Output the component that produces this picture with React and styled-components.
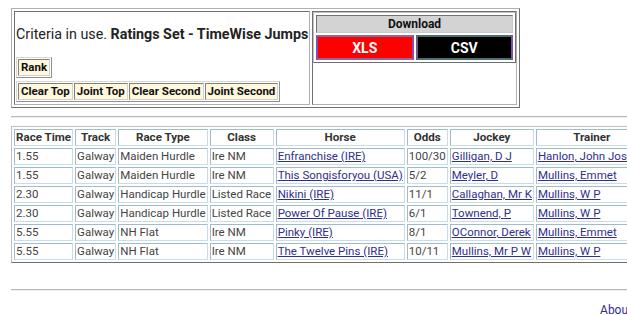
import React from "react";
import styled, { createGlobalStyle } from "styled-components";

const GlobalStyle = createGlobalStyle`
  html, body {
    margin: 0;
    padding: 0;
    background: #fff;
    overflow: hidden;
  }
  body {
    font-family: Roboto, "Liberation Sans", Arial, sans-serif;
    color: #222;
  }
`;

const Page = styled.div`
  width: 700px;
  padding: 8px 0 0 11px;
`;

const CriteriaTable = styled.table`
  border: 1px solid;
  border-color: #b0b0b0 #707070 #707070 #b0b0b0;
  border-spacing: 2px;
  border-collapse: separate;
`;

const CriteriaCell = styled.td`
  border: 1px solid;
  border-color: #707070 #b0b0b0 #b0b0b0 #707070;
  padding: 0;
  vertical-align: top;
  width: ${(p) => p.$width};
  height: 92px;
`;

const CriteriaText = styled.div`
  font-size: 14.3px;
  padding: 14px 0 0 1px;
  height: 31px;
  line-height: 17px;
  white-space: nowrap;
`;

const ButtonTable = styled.table`
  border: 1px solid;
  border-color: #d8d8d0 #909090 #909090 #d8d8d0;
  border-spacing: 1px;
  border-collapse: separate;
  margin: ${(p) => p.$margin || "0"};
`;

const RankButton = styled.td`
  background: #fff8dc;
  border: 1px solid;
  border-color: #808080 #d0d0d0 #d0d0d0 #808080;
  font-size: 11.5px;
  font-weight: bold;
  line-height: 13px;
  padding: 1px 2px;
  white-space: nowrap;
  color: #111;
`;

const DownloadTable = styled.table`
  width: 100%;
  border: 1px solid;
  border-color: #c0c0c0 #707070 #707070 #c0c0c0;
  border-spacing: 2px;
  border-collapse: separate;
`;

const DownloadHead = styled.td`
  background: #d3d3d3;
  border: 1px solid;
  border-color: #707070 #c8c8c8 #c8c8c8 #707070;
  text-align: center;
  font-size: 12px;
  font-weight: bold;
  height: 16px;
  padding: 0;
  color: #111;
`;

const FileButton = styled.td`
  background: ${(p) => p.$bg};
  color: #fff;
  border: 2px solid;
  border-color: ${(p) => p.$edge};
  text-align: center;
  font-size: 14px;
  font-weight: bold;
  height: 20px;
  padding: 1px 0 0 0;
  width: 50%;
`;

const Rule = styled.div`
  height: 0;
  border-top: 1px solid #b8b8b8;
  border-bottom: 1px solid #eeeeee;
  margin: ${(p) => p.$margin};
`;

const RaceTable = styled.table`
  border: 1px solid;
  border-color: #c0c0c0 #707070 #707070 #c0c0c0;
  border-spacing: 2px;
  border-collapse: separate;
  font-size: 11.5px;
`;

const HeadCell = styled.th`
  border: 1px solid;
  border-color: #9fbccb #c8dde8 #c8dde8 #9fbccb;
  font-weight: bold;
  font-size: 11.6px;
  color: #333;
  padding: 0 1px;
  height: 15px;
  line-height: 15px;
  white-space: nowrap;
  text-align: center;
  min-width: ${(p) => p.$w || 0}px;
`;

const DataCell = styled.td`
  border: 1px solid;
  border-color: #9fbccb #c8dde8 #c8dde8 #9fbccb;
  color: #444;
  padding: 0 1px;
  height: 15px;
  line-height: 15px;
  white-space: nowrap;
`;

const RaceLink = styled.a`
  color: #2f2f8f;
  text-decoration: underline;
`;

const Footer = styled.div`
  text-align: right;
  padding: 12px 0 0 0;
  font-size: 12px;
`;

const FooterLink = styled.a`
  color: #2f2f8f;
  text-decoration: none;
  margin-right: 79px;
`;

const columns = [
  { label: "Race Time", w: 0 },
  { label: "Track", w: 0 },
  { label: "Race Type", w: 0 },
  { label: "Class", w: 60 },
  { label: "Horse", w: 0 },
  { label: "Odds", w: 0 },
  { label: "Jockey", w: 0 },
  { label: "Trainer", w: 0 },
];

const races = [
  ["1.55", "Galway", "Maiden Hurdle", "Ire NM", "Enfranchise (IRE)", "100/30", "Gilligan, D J", "Hanlon, John Joseph"],
  ["1.55", "Galway", "Maiden Hurdle", "Ire NM", "This Songisforyou (USA)", "5/2", "Meyler, D", "Mullins, Emmet"],
  ["2.30", "Galway", "Handicap Hurdle", "Listed Race", "Nikini (IRE)", "11/1", "Callaghan, Mr K", "Mullins, W P"],
  ["2.30", "Galway", "Handicap Hurdle", "Listed Race", "Power Of Pause (IRE)", "6/1", "Townend, P", "Mullins, W P"],
  ["5.55", "Galway", "NH Flat", "Ire NM", "Pinky (IRE)", "8/1", "OConnor, Derek", "Mullins, Emmet"],
  ["5.55", "Galway", "NH Flat", "Ire NM", "The Twelve Pins (IRE)", "10/11", "Mullins, Mr P W", "Mullins, W P"],
];

const linked = [4, 6, 7];

export default function App() {
  return (
    <>
      <GlobalStyle />
      <Page>
        <CriteriaTable>
          <tbody>
            <tr>
              <CriteriaCell $width="294px">
                <CriteriaText>
                  Criteria in use. <b>Ratings Set - TimeWise Jumps</b>
                </CriteriaText>
                <ButtonTable $margin="0 0 3px 1px">
                  <tbody>
                    <tr>
                      <RankButton>Rank</RankButton>
                    </tr>
                  </tbody>
                </ButtonTable>
                <ButtonTable $margin="0 0 0 1px">
                  <tbody>
                    <tr>
                      <RankButton>Clear Top</RankButton>
                      <RankButton>Joint Top</RankButton>
                      <RankButton>Clear Second</RankButton>
                      <RankButton>Joint Second</RankButton>
                    </tr>
                  </tbody>
                </ButtonTable>
              </CriteriaCell>
              <CriteriaCell $width="203px">
                <DownloadTable>
                  <tbody>
                    <tr>
                      <DownloadHead colSpan={2}>Download</DownloadHead>
                    </tr>
                    <tr>
                      <FileButton $bg="#ff0000" $edge="#8a6a9a #8a4aa8 #8a6a9a #8a4aa8">
                        XLS
                      </FileButton>
                      <FileButton $bg="#000000" $edge="#4a7070 #8a4aa8 #4a7070 #6a5a8a">
                        CSV
                      </FileButton>
                    </tr>
                  </tbody>
                </DownloadTable>
              </CriteriaCell>
            </tr>
          </tbody>
        </CriteriaTable>

        <Rule $margin="8px 0 8px 0" />

        <RaceTable>
          <thead>
            <tr>
              {columns.map((c) => (
                <HeadCell key={c.label} $w={c.w}>
                  {c.label}
                </HeadCell>
              ))}
            </tr>
          </thead>
          <tbody>
            {races.map((row, i) => (
              <tr key={i}>
                {row.map((val, j) => (
                  <DataCell key={j}>
                    {linked.includes(j) ? <RaceLink href="#">{val}</RaceLink> : val}
                  </DataCell>
                ))}
              </tr>
            ))}
          </tbody>
        </RaceTable>

        <Rule $margin="26px 0 0 0" />

        <Footer>
          <FooterLink href="#">About</FooterLink>
        </Footer>
      </Page>
    </>
  );
}
